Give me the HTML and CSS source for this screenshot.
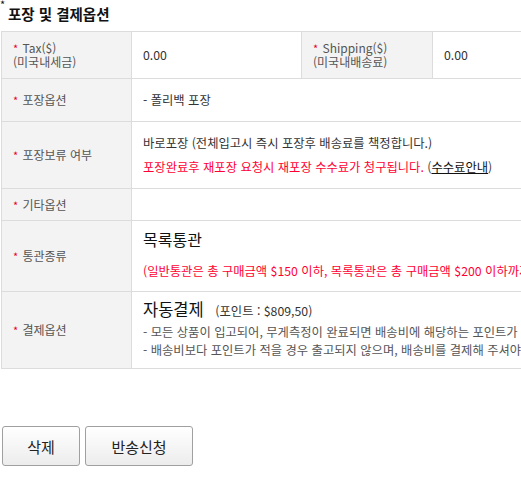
FILE: index.html
```html
<!DOCTYPE html>
<html lang="ko">
<head>
<meta charset="utf-8">
<link rel="stylesheet" href="styles.css">
</head>
<body>
<div class="wrap">
  <h3 class="title"><span class="dot">*</span>포장 및 결제옵션</h3>
  <table class="opt">
    <colgroup>
      <col class="c1"><col class="c2"><col class="c3"><col class="c4">
    </colgroup>
    <tr class="r1">
      <th><span class="req">*</span> Tax($)<br>(미국내세금)</th>
      <td>0.00</td>
      <th><span class="req">*</span> Shipping($)<br>(미국내배송료)</th>
      <td>0.00</td>
    </tr>
    <tr class="r2">
      <th><span class="req">*</span> 포장옵션</th>
      <td colspan="3">- 폴리백 포장</td>
    </tr>
    <tr class="r3">
      <th><span class="req">*</span> 포장보류 여부</th>
      <td colspan="3">
        <p class="line">바로포장 (전체입고시 즉시 포장후 배송료를 책정합니다.)</p>
        <p class="line red">포장완료후 재포장 요청시 재포장 수수료가 청구됩니다. <span class="dark">(<a class="link">수수료안내</a>)</span></p>
      </td>
    </tr>
    <tr class="r4">
      <th><span class="req">*</span> 기타옵션</th>
      <td colspan="3"></td>
    </tr>
    <tr class="r5">
      <th><span class="req">*</span> 통관종류</th>
      <td colspan="3">
        <p class="big">목록통관</p>
        <p class="line red nowrap">(일반통관은 총 구매금액 $150 이하, 목록통관은 총 구매금액 $200 이하까지 관부가세 면제)</p>
      </td>
    </tr>
    <tr class="r6">
      <th><span class="req">*</span> 결제옵션</th>
      <td colspan="3">
        <p class="big2">자동결제 <span class="point">(포인트 : $809,50)</span></p>
        <p class="small nowrap">- 모든 상품이 입고되어, 무게측정이 완료되면 배송비에 해당하는 포인트가 자동으로 결제됩니다.</p>
        <p class="small nowrap">- 배송비보다 포인트가 적을 경우 출고되지 않으며, 배송비를 결제해 주셔야 출고됩니다.</p>
      </td>
    </tr>
  </table>
  <div class="btns">
    <button class="btn b1">삭제</button>
    <button class="btn b2">반송신청</button>
  </div>
</div>
</body>
</html>
```
FILE: styles.css
```css
html, body {
  margin: 0;
  padding: 0;
  overflow: hidden;
  background: #fff;
}
body {
  font-family: "Noto Sans CJK KR", "Noto Sans", sans-serif;
  color: #333;
  font-size: 12px;
}
.wrap {
  width: 800px;
  padding-left: 1px;
}
.title {
  margin: 0 0 0 -1px;
  height: 31px;
  line-height: 27px;
  font-size: 14.5px;
  font-weight: bold;
  color: #111;
  position: relative;
  padding-left: 8px;
}
.title .dot {
  position: absolute;
  left: 0;
  top: -4px;
  line-height: 16px;
  font-size: 11px;
  font-weight: normal;
}
.opt {
  border-collapse: collapse;
  width: 760px;
  table-layout: fixed;
}
.c1 { width: 130px; }
.c2 { width: 170px; }
.c3 { width: 131px; }
.opt th, .opt td {
  border: 1px solid #dcdcdc;
  padding: 0 0 0 11px;
  text-align: left;
  vertical-align: middle;
  line-height: 14px;
}
.opt th {
  background: #f3f3f3;
  font-weight: normal;
  color: #555;
  font-size: 12px;
}
.opt td {
  color: #333;
  font-size: 12.3px;
}
.req {
  color: #e4002b;
  font-size: 11px;
  margin-right: 1px;
}
.r1 { height: 47px; }
.r2 { height: 43px; }
.r3 { height: 67px; }
.r4 { height: 32px; }
.r5 { height: 71px; }
.r6 { height: 77px; }
p { margin: 0; }
.r3 .line { line-height: 24px; }
.red { color: #ff0033; }
.dark { color: #444; }
.link { color: #111; text-decoration: underline; }
.nowrap { white-space: nowrap; }
.big {
  font-size: 16px;
  line-height: 20px;
  color: #111;
  margin-bottom: 14px;
  margin-top: -4px;
}
.r5 .line { line-height: 16px; }
.big2 {
  font-size: 16.5px;
  line-height: 22px;
  color: #111;
  margin-bottom: 1px;
  margin-top: -3px;
}
.point { font-size: 12.3px; color: #333; margin-left: 7px; }
.small { line-height: 18px; color: #555; }
.btns {
  display: flex;
  gap: 5px;
  margin-top: 57px;
  padding-left: 1px;
}
.btn {
  height: 40px;
  border: 1px solid #a0a0a0;
  border-radius: 3px;
  background: linear-gradient(#ffffff, #ececec);
  font-family: "Noto Sans CJK KR", sans-serif;
  font-size: 15px;
  color: #222;
  padding: 0;
}
.b1 { width: 78px; }
.b2 { width: 108px; }
```
